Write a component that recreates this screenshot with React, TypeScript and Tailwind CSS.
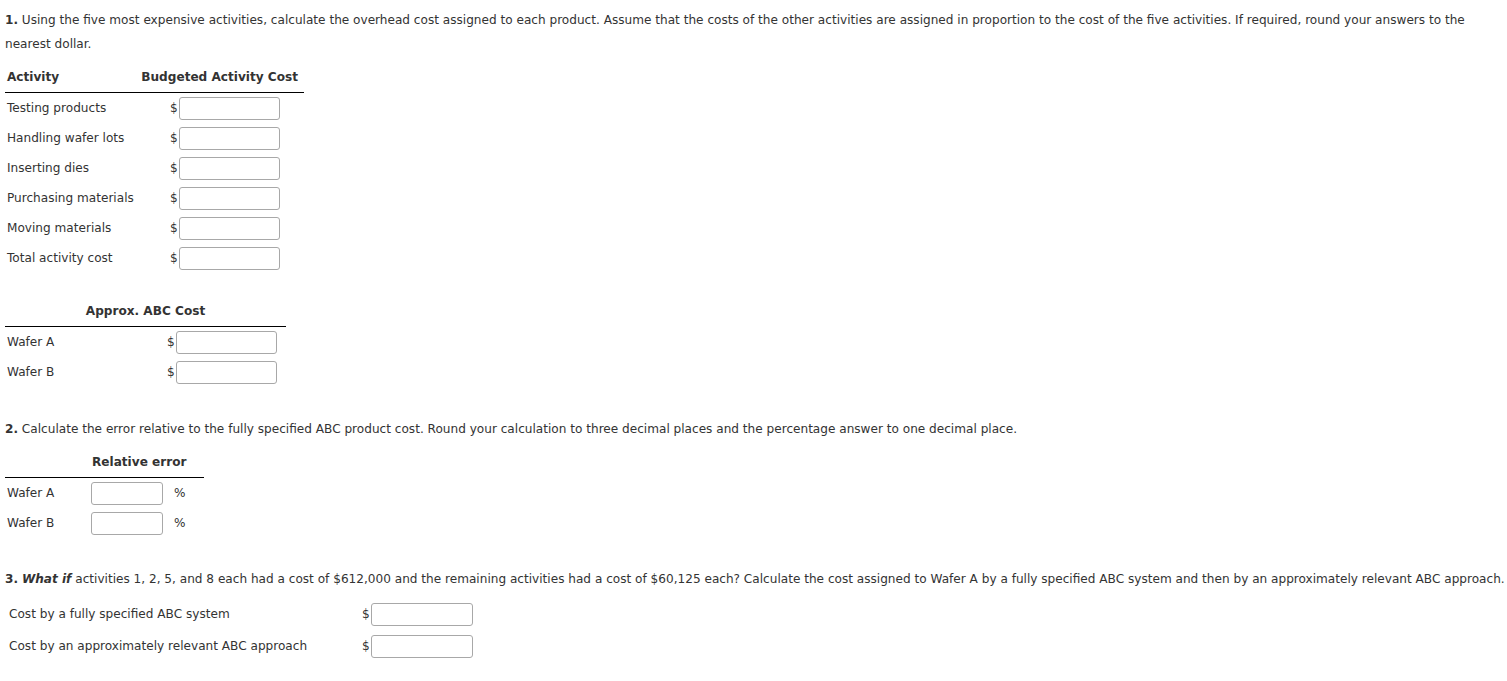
import React from "react";

const font = { fontFamily: '"DejaVu Sans", Verdana, sans-serif' };

function Input({ w = "w-[101px]" }: { w?: string }) {
  return <span className={`block ${w} h-[23px] border border-[#a8a8a8] rounded-[3px] bg-white`} />;
}

function Dollar({ w = "w-[101px]" }: { w?: string }) {
  return (
    <span className="flex items-center">
      <span className="text-[#333] mr-[1px]">$</span>
      <Input w={w} />
    </span>
  );
}

export default function App() {
  const activities = [
    "Testing products",
    "Handling wafer lots",
    "Inserting dies",
    "Purchasing materials",
    "Moving materials",
    "Total activity cost",
  ];
  return (
    <div className="text-[12.1px] text-[#333] leading-[24px] bg-white min-h-[681px] w-[1507px] pl-[5px] pt-[8px]" style={font}>
      <p className="w-[1470px]">
        <b>1.</b> Using the five most expensive activities, calculate the overhead cost assigned to each product. Assume that the costs of the other activities are assigned in proportion to the cost of the five activities. If required, round your answers to the nearest dollar.
      </p>

      <div className="mt-[6px] w-[299px] whitespace-nowrap">
        <div className="flex items-center justify-between h-[31px] border-b-[1.5px] border-black font-bold pl-[2px] pr-[6px]">
          <span>Activity</span>
          <span>Budgeted Activity Cost</span>
        </div>
        {activities.map((a) => (
          <div key={a} className="flex items-center h-[30px]">
            <span className="w-[165px] pl-[2px]">{a}</span>
            <Dollar />
          </div>
        ))}
      </div>

      <div className="mt-[23px] w-[281px] whitespace-nowrap">
        <div className="flex items-center justify-center h-[31px] border-b-[1.5px] border-black font-bold">
          Approx. ABC Cost
        </div>
        {["Wafer A", "Wafer B"].map((a) => (
          <div key={a} className="flex items-center h-[30px]">
            <span className="w-[162px] pl-[2px]">{a}</span>
            <Dollar />
          </div>
        ))}
      </div>

      <p className="mt-[30px]">
        <b>2.</b> Calculate the error relative to the fully specified ABC product cost. Round your calculation to three decimal places and the percentage answer to one decimal place.
      </p>

      <div className="mt-[6px] w-[199px] whitespace-nowrap">
        <div className="flex items-center h-[31px] border-b-[1.5px] border-black font-bold pl-[87px]">
          Relative error
        </div>
        {["Wafer A", "Wafer B"].map((a) => (
          <div key={a} className="flex items-center h-[30px]">
            <span className="w-[86px] pl-[2px]">{a}</span>
            <Input w="w-[72px]" />
            <span className="ml-[11px]">%</span>
          </div>
        ))}
      </div>

      <p className="mt-[29px] whitespace-nowrap">
        <b>3.</b> <b><i>What if</i></b> activities 1, 2, 5, and 8 each had a cost of $612,000 and the remaining activities had a cost of $60,125 each? Calculate the cost assigned to Wafer A by a fully specified ABC system and then by an approximately relevant ABC approach.
      </p>

      <div className="mt-[7px] whitespace-nowrap">
        {["Cost by a fully specified ABC system", "Cost by an approximately relevant ABC approach"].map((a) => (
          <div key={a} className="flex items-center h-[32px]">
            <span className="pl-[4px] w-[357px]">{a}</span>
            <Dollar w="w-[102px]" />
          </div>
        ))}
      </div>
    </div>
  );
}
